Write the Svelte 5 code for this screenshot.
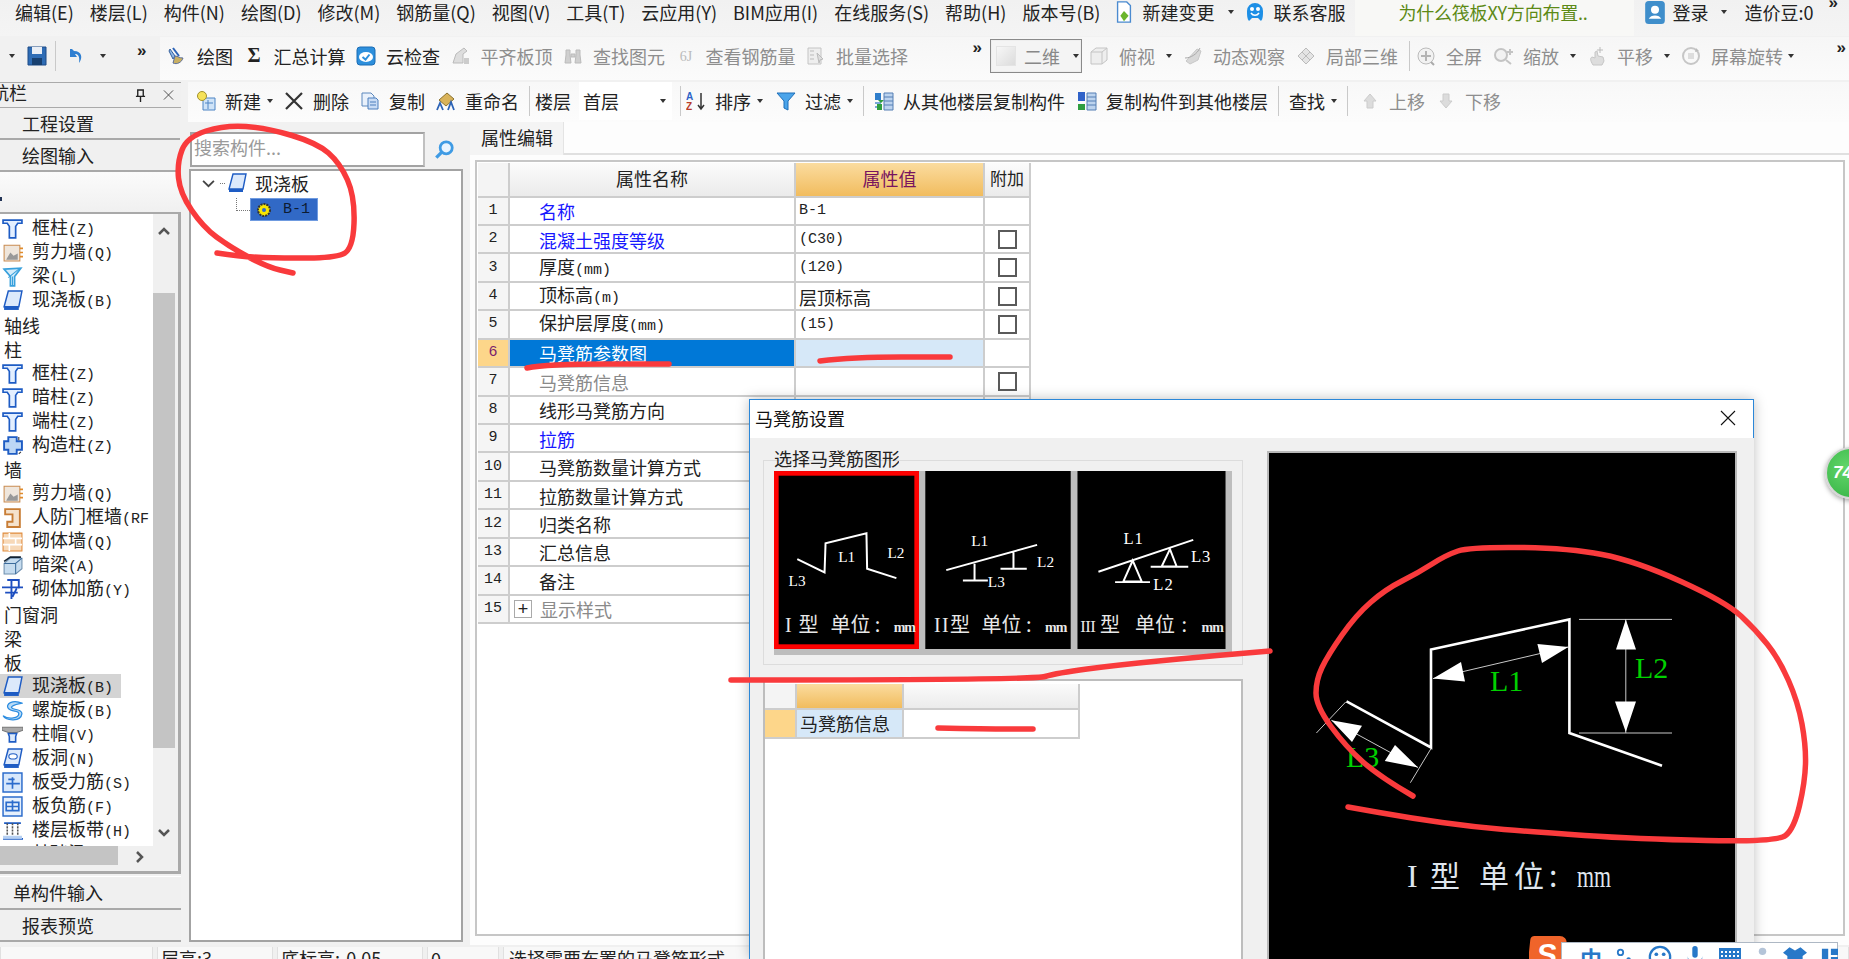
<script>
  const menu = ['编辑(E)','楼层(L)','构件(N)','绘图(D)','修改(M)','钢筋量(Q)','视图(V)','工具(T)','云应用(Y)','BIM应用(I)','在线服务(S)','帮助(H)','版本号(B)'];
  const tb2a = [['brush','绘图'],['sigma','汇总计算'],['cloud','云检查'],['align','平齐板顶',1],['binoc','查找图元',1],['six','查看钢筋量',1],['batch','批量选择',1]];
  const list = [
    ['col','框柱','(Z)'],['wall','剪力墙','(Q)'],['beam','梁','(L)'],['slab','现浇板','(B)'],[0,'轴线'],[0,'柱'],
    ['col','框柱','(Z)'],['col','暗柱','(Z)'],['col','端柱','(Z)'],['gz','构造柱','(Z)'],[0,'墙'],
    ['wall','剪力墙','(Q)'],['door','人防门框墙','(RF'],['brick','砌体墙','(Q)'],['dark','暗梁','(A)'],['mj','砌体加筋','(Y)'],
    [0,'门窗洞'],[0,'梁'],[0,'板'],['slab','现浇板','(B)',1],['spiral','螺旋板','(B)'],['cap','柱帽','(V)'],
    ['hole','板洞','(N)'],['sf','板受力筋','(S)'],['nf','板负筋','(F)'],['band','楼层板带','(H)'],['band','基础梁','(F)']
  ];
  const rows = [
    {n:'名称',c:'blue',v:'B-1',m:1},
    {n:'混凝土强度等级',c:'blue',v:'(C30)',m:1,b:1},
    {n:'厚度',u:'(mm)',v:'(120)',m:1,b:1},
    {n:'顶标高',u:'(m)',v:'层顶标高',b:1},
    {n:'保护层厚度',u:'(mm)',v:'(15)',m:1,b:1},
    {n:'马凳筋参数图',s:1},
    {n:'马凳筋信息',c:'grey',b:1},
    {n:'线形马凳筋方向'},
    {n:'拉筋',c:'blue'},
    {n:'马凳筋数量计算方式'},
    {n:'拉筋数量计算方式'},
    {n:'归类名称'},
    {n:'汇总信息'},
    {n:'备注'},
    {n:'显示样式',c:'grey',plus:1}
  ];
  function smooth(p){
    let d = `M${p[0][0]} ${p[0][1]}`;
    for(let i=1;i<p.length-1;i++){
      const mx=(p[i][0]+p[i+1][0])/2, my=(p[i][1]+p[i+1][1])/2;
      d += ` Q${p[i][0]} ${p[i][1]} ${mx} ${my}`;
    }
    const l=p[p.length-1];
    return d+` L${l[0]} ${l[1]}`;
  }
  const strokes = [
    [[217,253],[243,257],[283,258],[333,258],[353,250],[355,197],[340,163],[317,143],[267,128],[225,125],[187,137],[177,163],[180,193],[203,227],[230,247],[267,267],[293,273]],
    [[527,368],[546,364],[669,364]],
    [[820,361],[853,357],[950,357]],
    [[731,680],[1033,680],[1057,673],[1117,665],[1200,657],[1270,651]],
    [[938,728],[985,729],[1033,729]],
    [[1413,796],[1380,777],[1346,747],[1316,706],[1316,680],[1328,655],[1356,615],[1386,589],[1418,573],[1446,555],[1470,547],[1568,548],[1636,561],[1726,602],[1756,630],[1779,659],[1798,702],[1806,746],[1805,782],[1794,829],[1777,842],[1636,839],[1534,832],[1474,827],[1410,818],[1348,807]]
  ];
</script>

{#snippet icon(k)}
  <svg class="ic" viewBox="0 0 20 20">
    {#if k==='brush'}
      <path d="M3 3l5 7-2 3-4-8z" fill="#8fb8e8" stroke="#35609c"/><path d="M8 10c3 0 4 2 8 2-1 4-6 7-10 5z" fill="#c9b063" stroke="#5c6f9a"/><path d="M6 2l6 8" stroke="#2c63b6" stroke-width="2"/>
    {:else if k==='sigma'}
      <text x="10" y="16" text-anchor="middle" class="sig">Σ</text>
    {:else if k==='cloud'}
      <rect x="1" y="1" width="18" height="18" rx="3" fill="#2d8fdc" stroke="#1a6cb5"/><ellipse cx="10" cy="11" rx="7" ry="5" fill="#fff"/><path d="M6.500 11l3 2.500 4-5" fill="none" stroke="#2d8fdc" stroke-width="2"/>
    {:else if k==='align'}
      <path d="M2 17l3-9 8-6 3 3-4 3v9z" fill="#ddd" stroke="#bbb"/><path d="M13 12h5v6h-5z" fill="#ccc"/>
    {:else if k==='binoc'}
      <path d="M3 4h4v5l1 8H2l1-8zM13 4h4v5l1 8h-6l1-8zM8 8h4v3H8z" fill="#cfcfcf" stroke="#bbb"/>
    {:else if k==='six'}
      <text x="10" y="15" text-anchor="middle" class="six">6J</text>
    {:else if k==='batch'}
      <path d="M2 2h13v16H2z" fill="#eee" stroke="#c4c4c4"/><path d="M4 5h4M4 9h4M4 13h4M11 7l6 6-3 1-1 3z" stroke="#bbb" fill="#ddd"/>
    {:else if k==='cube'}
      <path d="M2 6l5-4h11v12l-5 4H2zM2 6h11v12M13 6l5-4" fill="#eee" stroke="#c4c4c4"/>
    {:else if k==='orbit'}
      <path d="M3 15L14 3l4 2-3 9-8 4z" fill="#d8d8d8" stroke="#c8c8c8"/><path d="M2 12c6 0 12-4 15-10" fill="none" stroke="#aaa"/>
    {:else if k==='part'}
      <path d="M10 2l8 8-8 8-8-8z" fill="#e4e4e4" stroke="#bbb"/><path d="M6 6l8 8M14 6l-8 8" stroke="#bbb"/>
    {:else if k==='full'}
      <circle cx="10" cy="10" r="8" fill="#f2f2f2" stroke="#bbb"/><path d="M10 5v10M5 10h10" stroke="#b4b4b4" stroke-width="2"/><path d="M15 16l3 3" stroke="#aaa" stroke-width="2"/>
    {:else if k==='zoom'}
      <circle cx="8" cy="9" r="6" fill="#f2f2f2" stroke="#c4c4c4" stroke-width="2"/><path d="M13 14l5 4M17 3v6M14 6h6" stroke="#c4c4c4" stroke-width="2"/>
    {:else if k==='pan'}
      <path d="M6 19c-3-5-3-7-1-8l3 1V6l2-1 1 5 5 1 1 4-2 4z" fill="#ddd" stroke="#c6c6c6"/><path d="M13 1v6M10 4h6" stroke="#bbb"/>
    {:else if k==='rotate'}
      <circle cx="10" cy="10" r="8" fill="none" stroke="#c6c6c6" stroke-width="2"/><path d="M7 7h6v6H7z" fill="#ddd"/><path d="M15 2l3 3-4 1z" fill="#bbb"/>
    {:else if k==='new'}
      <path d="M7 7h12v12H7z" fill="#cfe3f7" stroke="#4d84c4"/><path d="M9 12h8M12 9v9" stroke="#4d84c4"/><circle cx="6" cy="5" r="4.500" fill="#f6e25a" stroke="#a2912c"/>
    {:else if k==='x'}
      <path d="M2 2l16 16M18 2L2 18" stroke="#333" stroke-width="2.200"/>
    {:else if k==='copy'}
      <path d="M2 2h9l3 3v10H2z" fill="#e9f1fb" stroke="#5d88bd"/><path d="M8 7h8l2 2v9H8z" fill="#c9dcf5" stroke="#4d7fbd"/><path d="M10 11h6M10 14h6" stroke="#4d7fbd"/>
    {:else if k==='rename'}
      <path d="M3 9l8-7 7 6-8 7z" fill="#d9b35a" stroke="#8a7230"/><path d="M1 19l3-7 3 7M12 19l3-8 3 8" fill="none" stroke="#2c63b6" stroke-width="1.800"/>
    {:else if k==='sort'}
      <text x="0" y="9" class="az a">A</text><text x="0" y="19" class="az z">Z</text><path d="M15 2v15M12 14l3 4 3-4" fill="none" stroke="#333" stroke-width="1.500"/>
    {:else if k==='funnel'}
      <path d="M1 2h18l-7 8v9l-4-2v-7z" fill="#4aa4ea" stroke="#1f6fb8"/>
    {:else if k==='from'}
      <path d="M1 2h6v7H1z" fill="#2f7ecb"/><path d="M1 11h6v2H1zM1 15h6v2H1z" fill="#79a8d8"/><path d="M4 9l3 3 3-3zM3 13h5v6H3z" fill="#2f9e3f"/><path d="M10 2h9v17h-9z" fill="#bcd3ee" stroke="#557fb4"/><path d="M10 6h9M10 10h9M10 14h9" stroke="#557fb4"/>
    {:else if k==='to'}
      <path d="M10 2h9v17h-9z" fill="#bcd3ee" stroke="#557fb4"/><path d="M10 6h9M10 10h9M10 14h9" stroke="#557fb4"/><path d="M1 1h7v9H1z" fill="#2f62c9"/><path d="M1 13h7v6H1z" fill="#2f9e3f"/>
    {:else if k==='up'}
      <path d="M10 3l6 7h-3v7H7v-7H4z" fill="#dcdcdc" stroke="#ccc"/>
    {:else if k==='down'}
      <path d="M10 17l6-7h-3V3H7v7H4z" fill="#dcdcdc" stroke="#ccc"/>
    {:else if k==='col'}
      <path d="M1 2h18v3h-4l-2 3v11H7V8L5 5H1z" fill="#e3efff" stroke="#1e5cc4" stroke-width="1.600"/>
    {:else if k==='wall'}
      <path d="M2 3h15v15H2z" fill="#efe6dc" stroke="#c98c52"/><path d="M5 15l3-5 3 3 4-2v6H4z" fill="#999"/><path d="M17 6h3M17 10h3M17 14h3" stroke="#e08b2c" stroke-width="1.600"/>
    {:else if k==='beam'}
      <path d="M2 3l16-1-6 8v9H8v-9z" fill="#d4ecfa" stroke="#38a0dc" stroke-width="1.600"/><path d="M6 11l10-8M10 10v9" stroke="#38a0dc"/>
    {:else if k==='slab'}
      <path d="M6 1h13l-3 15H2z" fill="#dce9fb" stroke="#1e5cc4" stroke-width="1.400"/><path d="M2 16h14v3H2z" fill="#1e5cc4"/>
    {:else if k==='gz'}
      <path d="M6 2h8v4h5v8h-5v4H6v-4H2V6h4z" fill="#bcd6f5" stroke="#1e5cc4" stroke-width="1.800"/><path d="M16 2v3M18 16l-2 2" stroke="#333"/>
    {:else if k==='door'}
      <path d="M3 2h14v17H5v-5h5V7H3z" fill="#f5e2cc" stroke="#c87d35" stroke-width="1.800"/>
    {:else if k==='brick'}
      <path d="M1 2h18v17H1z" fill="#f7d9b8" stroke="#e08b3c"/><path d="M1 7h18M1 13h18M7 2v5M13 7v6M7 13v6" stroke="#fff" stroke-width="1.500"/>
    {:else if k==='dark'}
      <path d="M2 8l6-5h11v10l-6 5H2z" fill="#c6dcef" stroke="#6f8fae"/><path d="M2 8h11v10M13 8l6-5" fill="none" stroke="#3c6c9c"/><path d="M2 6l6-4h10" fill="none" stroke="#123" stroke-width="1.500"/>
    {:else if k==='mj'}
      <path d="M0 8h20M5 1h11v8M9 1v18M14 9l-4 8M3 13h12" fill="none" stroke="#1e4fc0" stroke-width="1.800"/>
    {:else if k==='spiral'}
      <path d="M19 3C10-1 3 4 6 8s10 1 10 5-9 6-15 2c3 5 17 6 18-2 0-5-9-3-10-6 0-2 6-3 10-4z" fill="#b9dbf6" stroke="#2c8ce0" stroke-width="1.200"/>
    {:else if k==='cap'}
      <path d="M0 3h20v3l-6 2H6L0 6z" fill="#aaa" stroke="#777"/><path d="M6 9h8l-1 3v5H7v-5z" fill="#dbe9fb" stroke="#1e5cc4" stroke-width="1.500"/>
    {:else if k==='hole'}
      <path d="M6 1h13l-3 15H2z" fill="#dce9fb" stroke="#1e5cc4" stroke-width="1.400"/><path d="M2 16h14v3H2z" fill="#1e5cc4"/><ellipse cx="10.500" cy="8" rx="4" ry="2.500" fill="#fff" stroke="#1e5cc4"/>
    {:else if k==='sf'}
      <path d="M1 1h18v18H1z" fill="#d7e7fb" stroke="#2c6ccc" stroke-width="1.400"/><path d="M4 11h13M10 5v11M6 7h6" fill="none" stroke="#2c6ccc" stroke-width="1.600"/>
    {:else if k==='nf'}
      <path d="M1 1h18v18H1z" fill="#e6f0fc" stroke="#2c6ccc" stroke-width="1.400"/><path d="M4 6h12v8H4zM4 10h12M10 4v10" fill="none" stroke="#2c6ccc" stroke-width="1.600"/>
    {:else if k==='band'}
      <path d="M2 3h16M1 18h19" stroke="#1e5cc4" stroke-width="1.800"/><path d="M5 3v12M10 3v12M15 3v12" stroke="#555" stroke-width="1.500" stroke-dasharray="2 1"/><path d="M1 15h18v3H1z" fill="#b6d0f2"/>
    {/if}
  </svg>
{/snippet}

<div class="app">
  <header class="menubar">
    {#each menu as m}<span class="m">{m}</span>{/each}
    <span class="mi change">
      <svg class="ic" viewBox="0 0 20 24"><path d="M3 1h10l4 4v18H3z" fill="#fff" stroke="#4a8ad0" stroke-width="1.500"/><path d="M10 11l5 5-5 6-4-6z" fill="#6ab52c"/></svg>
      <span>新建变更</span><i class="caret"></i>
    </span>
    <span class="mi service">
      <svg class="ic" viewBox="0 0 20 22"><path d="M2 10a8 8 0 0116 0c0 4 0 8-2 10l-3-3H7l-3 3c-2-2-2-6-2-10z" fill="#1d8fe6"/><circle cx="7" cy="8" r="2" fill="#fff"/><circle cx="13" cy="8" r="2" fill="#fff"/><path d="M6 12c2 3 6 3 8 0" fill="none" stroke="#fff" stroke-width="1.500"/></svg>
      <span>联系客服</span>
    </span>
    <span class="promo">为什么筏板XY方向布置..</span>
    <span class="mi login">
      <svg class="uicon" viewBox="0 0 24 28"><rect x="1" y="1" width="22" height="26" rx="4" fill="#3f8ecb"/><circle cx="12" cy="11" r="4.500" fill="#fff"/><path d="M5 21c2-5 12-5 14 0z" fill="#fff"/></svg>
      <span>登录</span><i class="caret"></i>
    </span>
    <span class="m bean">造价豆:0</span>
    <span class="more top">»</span>
  </header>

  <div class="tb2">
    <div class="seg s1">
      <i class="caret"></i>
      <svg class="ic save" viewBox="0 0 20 20"><path d="M1 1h18v18H1z" fill="#2e6cb5" stroke="#1d4a87"/><path d="M5 1h10v7H5z" fill="#e9eef5"/><path d="M5 12h10v7H5z" fill="#174070"/></svg>
      <span class="vsep"></span>
      <svg class="ic undo" viewBox="0 0 20 20"><path d="M4 3v8h7l-2-3c3 0 5 2 4 9 4-5 3-12-5-12L6 3z" fill="#2f7fd1"/></svg>
      <i class="caret c2"></i>
      <span class="more">»</span>
    </div>
    <div class="seg s2">
      {#each tb2a as [k,t,d]}
        <span class="it" class:dis={d}>{@render icon(k)}<span>{t}</span></span>
      {/each}
      <span class="more end">»</span>
    </div>
    <div class="seg s3">
      <span class="combo2"><span class="sq"></span><span>二维</span><i class="caret"></i></span>
      <span class="it dis">{@render icon('cube')}<span>俯视</span><i class="caret"></i></span>
      <span class="it dis">{@render icon('orbit')}<span>动态观察</span></span>
      <span class="it dis">{@render icon('part')}<span>局部三维</span></span>
      <span class="vsep"></span>
      <span class="it dis">{@render icon('full')}<span>全屏</span></span>
      <span class="it dis">{@render icon('zoom')}<span>缩放</span><i class="caret"></i></span>
      <span class="it dis">{@render icon('pan')}<span>平移</span><i class="caret"></i></span>
      <span class="it dis">{@render icon('rotate')}<span>屏幕旋转</span><i class="caret tight"></i></span>
      <span class="more end">»</span>
    </div>
  </div>

  <div class="body">
    <aside class="left">
      <div class="lhead">
        <span class="lt">航栏</span>
        <svg class="pin" viewBox="0 0 12 14"><path d="M3 1h6v7H3zM1 8h10M6 8v6" fill="none" stroke="#222" stroke-width="1.500"/></svg>
        <svg class="cl" viewBox="0 0 12 12"><path d="M1 1l10 10M11 1L1 11" stroke="#444"/></svg>
      </div>
      <div class="ltab t1">工程设置</div>
      <div class="ltab t2">绘图输入</div>
      <div class="lsec"><i class="dot"></i></div>
      <div class="lbox">
        <div class="lmain">
          <div class="llist">
            {#each list as [k,n,c,sel]}
              <div class="lr" class:sel class:sect={!k}>
                {#if k}{@render icon(k)}{/if}<span class="tx">{n}{#if c}<span class="mono">{c}</span>{/if}</span>
              </div>
            {/each}
          </div>
          <div class="vbar">
            <svg class="ar" viewBox="0 0 14 10"><path d="M2 8l5-5 5 5" fill="none" stroke="#555" stroke-width="2.500"/></svg>
            <div class="vthumb"></div>
            <svg class="ar" viewBox="0 0 14 10"><path d="M2 2l5 5 5-5" fill="none" stroke="#555" stroke-width="2.500"/></svg>
          </div>
        </div>
        <div class="hbar">
          <div class="hthumb"></div>
          <svg class="har" viewBox="0 0 10 14"><path d="M2 2l5 5-5 5" fill="none" stroke="#555" stroke-width="2.500"/></svg>
        </div>
      </div>
      <div class="ltab t3">单构件输入</div>
      <div class="ltab t4">报表预览</div>
    </aside>

    <div class="rightcol">
      <div class="tb3">
        <span class="it">{@render icon('new')}<span>新建</span><i class="caret"></i></span>
        <span class="it">{@render icon('x')}<span>删除</span></span>
        <span class="it">{@render icon('copy')}<span>复制</span></span>
        <span class="it">{@render icon('rename')}<span>重命名</span></span>
        <span class="vsep"></span>
        <span class="floor">楼层</span>
        <span class="fcombo"><span>首层</span><i class="caret"></i></span>
        <span class="vsep"></span>
        <span class="it">{@render icon('sort')}<span>排序</span><i class="caret"></i></span>
        <span class="it filter">{@render icon('funnel')}<span>过滤</span><i class="caret"></i></span>
        <span class="vsep"></span>
        <span class="it from">{@render icon('from')}<span>从其他楼层复制构件</span></span>
        <span class="it to">{@render icon('to')}<span>复制构件到其他楼层</span></span>
        <span class="vsep"></span>
        <span class="it find">查找<i class="caret"></i></span>
        <span class="vsep"></span>
        <span class="it dis upi">{@render icon('up')}<span>上移</span></span>
        <span class="it dis">{@render icon('down')}<span>下移</span></span>
      </div>

      <div class="panes">
        <section class="mid">
          <div class="searchrow">
            <div class="search">搜索构件...</div>
            <svg class="sicon" viewBox="0 0 20 20"><circle cx="12" cy="8" r="5.500" fill="#eaf5ff" stroke="#3f9be4" stroke-width="2.500"/><path d="M8 12l-5 5" stroke="#3f9be4" stroke-width="3"/></svg>
          </div>
          <div class="tree">
            <div class="tnode">
              <svg class="chev" viewBox="0 0 14 10"><path d="M1 2l6 6 6-6" fill="none" stroke="#444" stroke-width="2"/></svg>
              <span class="dots"></span>
              {@render icon('slab')}
              <span class="cn">现浇板</span>
            </div>
            <div class="tleaf">
              <span class="elbow"></span>
              <span class="leafsel">
                <svg class="gear" viewBox="0 0 16 16"><circle cx="8" cy="8" r="6" fill="#f7e600" stroke="#333" stroke-dasharray="2 1" stroke-width="2"/><circle cx="8" cy="8" r="2" fill="#3169c6"/></svg>
                <span class="mono">B-1</span>
              </span>
            </div>
          </div>
        </section>

        <section class="props">
          <div class="tabs"><div class="tab">属性编辑</div></div>
          <div class="gridbox">
            <div class="grow head">
              <div class="c num"></div>
              <div class="c name ctr">属性名称</div>
              <div class="c val gold">属性值</div>
              <div class="c ext">附加</div>
            </div>
            {#each rows as r,i}
              <div class="grow" class:on={r.s}>
                <div class="c num">{i+1}</div>
                <div class="c name" class:blue={r.c==='blue'} class:grey={r.c==='grey'}>
                  {#if r.plus}<span class="plus">+</span>{/if}
                  <span class="tx">{r.n}{#if r.u}<span class="mono">{r.u}</span>{/if}</span>
                </div>
                <div class="c val">{#if r.v}<span class:mono={r.m}>{r.v}</span>{/if}</div>
                <div class="c ext">{#if r.b}<span class="check"></span>{/if}</div>
              </div>
            {/each}
          </div>
        </section>
      </div>
    </div>
  </div>

  <footer class="status">
    <span class="sc a"></span>
    <span class="sc b">层高:3</span>
    <span class="sc d">底标高:-0.05</span>
    <span class="sc e">0</span>
    <span class="sc f">选择需要布置的马凳筋形式</span>
  </footer>

  <div class="dialog">
    <div class="dtitle">
      <span>马凳筋设置</span>
      <svg class="dclose" viewBox="0 0 16 16"><path d="M1 1l14 14M15 1L1 15" stroke="#111" stroke-width="1.100"/></svg>
    </div>
    <div class="dbody">
      <div class="dleft">
        <div class="group">
          <span class="glabel">选择马凳筋图形</span>
          <div class="strip">
            <svg class="thumb t-a" viewBox="102 243 436 535">
              <rect x="102" y="243" width="436" height="535" fill="#000"/>
              <rect x="109" y="250" width="422" height="521" fill="none" stroke="#f00" stroke-width="14"/>
              <path d="M172 508l82 40 3-88 123-30 2 107 88 28" fill="none" stroke="#fff" stroke-width="6"/>
              <text x="295" y="517" class="lb">L1</text><text x="443" y="503" class="lb">L2</text><text x="146" y="588" class="lb">L3</text>
              <text x="135" y="726" class="cap">I</text><text x="176" y="726" class="capc">型</text><text x="272" y="726" class="capc">单位</text><text x="405" y="726" class="capc">:</text><text x="462" y="726" class="mm">mm</text>
            </svg>
            <svg class="thumb t-b" viewBox="557 243 437 535">
              <rect x="557" y="243" width="437" height="535" fill="#000"/>
              <path d="M620 541l273-76M705 522v50M670 572h75M822 488v49M783 537h79" fill="none" stroke="#fff" stroke-width="6"/>
              <text x="695" y="468" class="lb">L1</text><text x="893" y="533" class="lb">L2</text><text x="745" y="593" class="lb">L3</text>
              <text x="583" y="726" class="cap">II</text><text x="631" y="726" class="capc">型</text><text x="726" y="726" class="capc">单位</text><text x="860" y="726" class="capc">:</text><text x="917" y="726" class="mm">mm</text>
            </svg>
            <svg class="thumb t-c" viewBox="1012 243 445 535">
              <rect x="1012" y="243" width="445" height="535" fill="#000"/>
              <path d="M1075 546l285-96M1178 512l-28 63h55zM1125 577h105M1290 478l-25 52h45zM1232 531h113" fill="none" stroke="#fff" stroke-width="6"/>
              <text x="1150" y="463" class="lb w">L1</text><text x="1353" y="516" class="lb w">L3</text><text x="1240" y="600" class="lb w">L2</text>
              <text x="1020" y="726" class="cap c3">III</text><text x="1080" y="726" class="capc">型</text><text x="1185" y="726" class="capc">单位</text><text x="1325" y="726" class="capc">:</text><text x="1385" y="726" class="mm">mm</text>
            </svg>
          </div>
        </div>
        <div class="lower">
          <div class="lrow lh"><span class="l1"></span><span class="l2 gold"></span><span class="l3 hd"></span></div>
          <div class="lrow"><span class="l1 org"></span><span class="l2 cur">马凳筋信息</span><span class="l3"></span></div>
        </div>
      </div>
      <div class="preview">
        <svg class="pv" viewBox="1269 453 466 506">
          <rect x="1269" y="453" width="466" height="506" fill="#000"/>
          <path d="M1346.500 701.400L1431 747.500V649.500L1569.400 619.400V733L1662 765.700" fill="none" stroke="#fff" stroke-width="2.600"/>
          <path d="M1579 619.400h93M1579 733h93M1625.800 619v114M1433 678.600L1568 647M1331.400 720.300L1418 767.500M1345.700 702L1316.400 733M1431 748.600L1410.400 782.700" fill="none" stroke="#c8c8c8" stroke-width="1"/>
          <path d="M1625.800 619.400L1616 649.500h20zM1625.800 732L1615 701.400h21zM1433 678.600L1461 662l4 19.500zM1568.300 647L1537.400 644l4.600 19zM1331.400 720.300L1362 725.800l-10 16.200zM1418 767.500L1395 745l-10.200 16z" fill="#fff"/>
          <text x="1635" y="678" class="gr">L2</text><text x="1490" y="691" class="gr">L1</text><text x="1346" y="767" class="gr">L3</text>
          <text x="1407" y="887" class="big">I</text><text x="1430" y="887" class="bigc">型</text><text x="1479" y="887" class="bigc">单位:</text><text x="1577" y="887" class="big" textLength="34" lengthAdjust="spacingAndGlyphs">mm</text>
        </svg>
      </div>
    </div>
  </div>

  <div class="ball"><span>74</span></div>

  <div class="ime">
    <div class="ilogo"><span>S</span></div>
    <div class="ibar">
      <span class="zh">中</span>
      <svg viewBox="0 0 20 20" class="ii"><circle cx="5" cy="6" r="3" fill="none" stroke="#2878c8" stroke-width="2"/><circle cx="14" cy="14" r="2.500" fill="#2878c8"/></svg>
      <svg viewBox="0 0 26 26" class="ii w"><circle cx="13" cy="13" r="11" fill="none" stroke="#2878c8" stroke-width="2.500"/><circle cx="9" cy="10" r="2" fill="#2878c8"/><circle cx="17" cy="10" r="2" fill="#2878c8"/></svg>
      <svg viewBox="0 0 20 24" class="ii"><rect x="7" y="1" width="6" height="13" rx="3" fill="#2878c8"/><path d="M2 12c0 9 16 9 16 0v8H2z" fill="#2878c8"/></svg>
      <svg viewBox="0 0 24 20" class="ii w"><rect x="1" y="1" width="22" height="18" fill="#2878c8"/><path d="M3 5h18M3 9h18" stroke="#fff" stroke-dasharray="2 2" stroke-width="2"/></svg>
      <svg viewBox="0 0 14 20" class="ii n"><circle cx="7" cy="5" r="4" fill="#b4c4d8"/><path d="M1 20c0-9 12-9 12 0z" fill="#b4c4d8"/></svg>
      <svg viewBox="0 0 22 20" class="ii w"><path d="M6 1l5 3 5-3 6 5-4 3v11H4V9L0 6z" fill="#2878c8"/></svg>
      <svg viewBox="0 0 20 20" class="ii"><path d="M1 2h7v16H1zM11 2h8v7h-8zM11 11h8v7h-8z" fill="#2878c8"/></svg>
    </div>
  </div>

  <svg class="ink" viewBox="0 0 1849 959">
    {#each strokes as s}<path d={smooth(s)}/>{/each}
  </svg>
</div>

<style>
  :global(body){margin:0;background:#f0f0f0}
  .app{position:relative;width:1849px;height:959px;overflow:hidden;display:flex;flex-direction:column;background:#f1f1f1;color:#222;font:18px/24px "Noto Sans CJK SC","Noto Sans",sans-serif;white-space:nowrap}
  .ic{width:20px;height:20px;flex:none;display:block}
  .mono{font:15px/24px "Liberation Mono",monospace}
  .caret{display:inline-block;width:0;height:0;border:3.500px solid transparent;border-top:4.500px solid #333;border-bottom:0;flex:none}

  .menubar{height:36px;box-sizing:border-box;flex:none;display:flex;align-items:center;gap:16px;padding:0 0 12px 15px;background:linear-gradient(#f1f1f1,#f4f4f4);position:relative}
  .mi{display:flex;align-items:center;gap:8px}
  .mi.change{margin-left:-2px}
  .mi.change .ic,.mi.service .ic{height:22px}
  .mi.change .caret{margin-left:6px}
  .mi.service{margin-left:-5px}
  .promo{width:279px;box-sizing:border-box;padding-left:43px;margin:0 0 -12px -6px;color:#5d8a16;background:#f8f8f6;line-height:24px;letter-spacing:-.2px;height:36px}
  .mi.login{margin-left:-6px;gap:6px}
  .uicon{width:22px;height:25px}
  .mi.login .caret{margin-left:7px}
  .bean{margin-left:1px}
  .more{font:700 17px/14px "Liberation Sans",sans-serif;color:#222}
  .more.top{position:absolute;right:11px;top:-4px}

  .tb2{height:46px;flex:none;display:flex;background:#f1f1f1}
  .seg{display:flex;align-items:center;position:relative;margin:1px 0 2px;padding-bottom:5px;box-sizing:border-box;background:linear-gradient(#f6f6f6,#fbfbfb)}
  .s1{width:160px;background:none;padding-left:9px}
  .s1 .save{margin-left:12px}
  .s1 .vsep{margin:0 10px 0 8px}
  .s1 .c2{margin-left:14px}
  .s1 .more{margin-left:31px;margin-top:-10px}
  .s2{width:825px;padding-left:7px;gap:10.500px}
  .s3{flex:1;padding-left:5px;gap:11px}
  .it{display:flex;align-items:center;gap:10px;flex:none}
  .tb2 .it .caret{margin-left:1px}
  .tb2 .it .caret.tight{margin-left:-5px}
  .s3 .vsep{margin-right:-5px}
  .it.dis{color:#8e8e8e}
  .more.end{position:absolute;right:3px;top:4px}
  .vsep{width:1px;height:30px;background:#c9c9c9;flex:none}
  .combo2{width:92px;height:34px;box-sizing:border-box;border:1px solid #8a8a8a;box-shadow:inset 0 0 0 1px #eee;display:flex;align-items:center;gap:8px;padding-left:5px;color:#888;flex:none;background:#f4f4f4;margin-right:-4px}
  .combo2 .sq{width:20px;height:20px;background:linear-gradient(135deg,#f7f7f7,#dcdcdc);border:1px solid #e4e4e4;box-sizing:border-box}
  .combo2 .caret{margin-left:5px}

  .body{flex:1;display:flex;min-height:0}
  .left{width:181px;flex:none;display:flex;flex-direction:column}
  .lhead{flex:none;position:relative;overflow:hidden;border-top:1px solid #aaa;border-bottom:1px solid #aaa;background:#f0f0f0;box-sizing:border-box;height:26px}
  .lt{position:absolute;left:-9px;top:-3px}
  .pin{position:absolute;left:135px;top:6px;width:11px;height:13px}
  .cl{position:absolute;left:163px;top:6px;width:11px;height:12px}
  .ltab{height:32px;flex:none;box-sizing:border-box;border-bottom:2px solid #a9a9a9;background:#f0f0f0;line-height:31px;padding-left:22px;margin-right:1px}
  .t3,.t4{margin-right:0}
  .t3{padding-left:13px;height:34px;border-top:1px solid #fff}
  .lsec{height:42px;flex:none;background:linear-gradient(#fbfbfb,#f0f0f0);border-bottom:2px solid #a9a9a9;box-sizing:border-box;position:relative}
  .dot{position:absolute;left:0;top:25px;width:2px;height:4px;background:#235}
  .lbox{height:660px;flex:none;box-sizing:border-box;border-right:3px solid #a9a9a9;border-bottom:3px solid #a9a9a9;display:flex;flex-direction:column;background:#f0f0f0;margin-bottom:2px}
  .lmain{height:632px;display:flex;overflow:hidden}
  .llist{width:153px;flex:none;overflow:hidden;background:#fff;padding-top:2.500px;box-sizing:border-box}
  .lr{height:24.100px;display:flex;align-items:center;padding-left:2px;overflow:hidden}
  .lr .ic{margin-right:9px;width:21px;height:21px}
  .lr.sect{padding-left:4px}
  .lr.sel{background:#d4d4d4;width:119px}
  .vbar{width:22px;flex:none;background:#f0f0f0;display:flex;flex-direction:column;align-items:center;justify-content:space-between;position:relative;padding:12px 0 8px;box-sizing:border-box}
  .ar{width:14px;height:10px}
  .vthumb{position:absolute;left:0;top:79px;width:22px;height:455px;background:#c4c4c4}
  .hbar{flex:1;display:flex;align-items:center;position:relative;background:#f0f0f0}
  .hthumb{position:absolute;left:0;top:0;bottom:6px;width:118px;background:#c4c4c4}
  .har{position:absolute;left:135px;top:4px;width:10px;height:14px}

  .rightcol{flex:1;display:flex;flex-direction:column;min-width:0}
  .tb3{height:40px;box-sizing:border-box;flex:none;margin-left:7px;padding:0 0 2px 8px;display:flex;align-items:center;gap:11px;background:linear-gradient(#f8f8f8,#fcfcfc)}
  .tb3 .it{gap:9px}
  .tb3 .caret{margin-left:-3px}
  .tb3 .vsep{margin:0 -6px 0 -1px}
  .tb3 .filter{margin-left:2px}
  .tb3 .from{margin-left:5px}
  .tb3 .to{margin-left:1px}
  .tb3 .find{margin-left:5px}
  .tb3 .upi{margin-left:7px}
  .fcombo{width:93px;height:38px;display:flex;align-items:center;justify-content:space-between;background:#fff;padding:0 6px 0 4px;box-sizing:border-box;margin-left:-3px;margin-right:-2px}
  .fcombo .caret{margin:0}
  .panes{flex:1;display:flex;min-height:0}

  .mid{width:284px;flex:none;margin-left:5px;display:flex;flex-direction:column;padding-top:10px;box-sizing:border-box}
  .searchrow{display:flex;align-items:center;height:35px;margin-left:4px;flex:none}
  .search{width:235px;height:35px;box-sizing:border-box;border:2px solid #a3a3a3;border-right-color:#c0c0c0;background:#fff;color:#9a9a9a;line-height:26px;padding-left:2px}
  .sicon{width:22px;height:22px;margin-left:8px}
  .tree{width:274px;height:773px;margin:2px 0 0 3px;box-sizing:border-box;border:2px solid #a3a3a3;background:#fff;flex:none}
  .tnode{display:flex;align-items:center;height:24px;padding-left:11px}
  .chev{width:13px;height:9px}
  .dots{width:5px;margin:0 2px 0 5px;border-top:1px dotted #777}
  .tnode .cn{margin-left:8px}
  .tleaf{display:flex;height:23px;margin-top:3px;padding-left:45px}
  .elbow{width:13px;height:12px;border-left:1px dotted #777;border-bottom:1px dotted #777;flex:none}
  .leafsel{width:68px;height:23px;background:#3169c6;display:flex;align-items:center;box-shadow:0 0 0 1px #6f9be0 inset;color:#0d1c33;padding-left:6px;box-sizing:border-box;gap:11px}
  .gear{width:16px;height:16px}

  .props{flex:1;display:flex;flex-direction:column;min-width:0;background:#fdfdfd;padding-bottom:9px}
  .tabs{height:31px;flex:none;border-bottom:2px solid #e0e0e0;box-sizing:content-box}
  .tab{width:94px;height:33px;box-sizing:border-box;background:#f4f4f4;padding-left:11px;line-height:30px;border-right:1px solid #e4e4e4}
  .gridbox{flex:1;margin:5px 4px 0 5px;border:2px solid #c6c6c6;padding:1px 0 0 1px;background:#fff;overflow:hidden;display:flex;flex-direction:column}
  .grow{display:flex;height:28.450px;flex:none;width:554px}
  .grow.head{height:34.500px}
  .c{box-sizing:border-box;border-right:2px solid #cdcdcd;border-bottom:2px solid #cdcdcd;display:flex;align-items:center;overflow:hidden}
  .num{width:32px;justify-content:center;background:#f5f5f5;font:15px/24px "Liberation Mono",monospace;color:#222}
  .name{width:286px;padding:1px 0 0 29px;background:#fff}
  .val{width:189px;padding:1px 0 0 3px;background:#fff}
  .ext{width:46px;justify-content:center;background:#fff}
  .head .c{background:linear-gradient(#fbfbfb,#ebebeb);justify-content:center;padding:0 0 2px}
  .head .num{background:#f4f4f4}
  .head .val.gold,.gold{background:linear-gradient(#fbdc9f,#f1bc5e);color:#78145f}
  .head .ext{font-size:17px}
  .blue{color:#1717ff}
  .grey{color:#8a8a8a}
  .on .num{background:#fdd68a;color:#7a1f6e}
  .on .name{background:#0078d7;color:#fff}
  .on .val{background:#d6e8f8}
  .check{width:19px;height:19px;box-sizing:border-box;border:2px solid #5a5a5a;background:#fff}
  .plus{width:18px;height:18px;border:1px solid #aaa;box-sizing:border-box;color:#222;display:flex;align-items:center;justify-content:center;line-height:14px;margin:0 8px 0 -25px;flex:none;font-family:"Liberation Sans",sans-serif}

  .status{height:14px;flex:none;display:flex;gap:4px;background:#f0f0f0;overflow:hidden;padding-top:2px;box-sizing:border-box}
  .sc{background:#f8f8f8;border-left:1px solid #e0e0e0;border-right:1px solid #e0e0e0;height:24px;padding-left:3px;box-sizing:border-box;flex:none;line-height:22px}
  .sc.a{width:153px}
  .sc.b{width:116px}
  .sc.d{width:146px}
  .sc.e{width:72px}
  .sc.f{flex:1;padding-left:5px}

  .dialog{position:absolute;left:749px;top:399px;width:1005px;height:560px;box-sizing:border-box;display:flex;flex-direction:column;background:#f0f0f0;border-left:1px solid #2b87d8;box-shadow:0 0 12px rgba(0,0,0,.25)}
  .dtitle{height:39px;flex:none;background:#fff;border-top:1px solid #2b87d8;border-right:1px solid #2b87d8;display:flex;align-items:center;justify-content:space-between;padding:0 17px 2px 5px;color:#111;box-sizing:border-box}
  .dclose{width:16px;height:16px}
  .dbody{flex:1;display:flex;min-height:0;padding:13px 17px 0 13px;gap:24px;overflow:hidden}
  .dleft{width:480px;flex:none;padding-top:9px;box-sizing:border-box;display:flex;flex-direction:column;gap:14px}
  .group{height:205px;flex:none;border:1px solid #dcdcdc;box-sizing:border-box;padding:10px 0 0 10px;position:relative}
  .glabel{position:absolute;left:10px;top:-15px;line-height:24px;width:125px;overflow:hidden}
  .strip{display:flex;width:458px;height:184px;gap:6px;background:#bdbdbd}
  .thumb{display:block;height:178px}
  .t-a{width:145px}
  .t-b{width:146px}
  .t-c{width:149px}
  .lb{font:46px "Liberation Serif",serif;fill:#fff}
  .lb.w{letter-spacing:3px;font-size:50px}
  .cap{font:60px "Liberation Serif",serif;fill:#e8e8e8;letter-spacing:4px}
  .cap.c3{font-size:50px;letter-spacing:-1.500px}
  .capc{font:60px "Noto Sans CJK SC",sans-serif;fill:#e8e8e8}
  .mm{font:700 42px "Liberation Serif",serif;fill:#e8e8e8;letter-spacing:-3px}
  .lower{flex:1;background:#fff;border:2px solid #bdbdbd;border-bottom:0;box-sizing:border-box;padding-top:3px}
  .lrow{display:flex;height:29px;width:315px}
  .lrow.lh{height:26px}
  .lrow span{box-sizing:border-box;border-right:2px solid #cdcdcd;border-bottom:2px solid #cdcdcd;display:block;line-height:26px}
  .l1{width:32px}
  .lh .l1{background:#f4f4f4}
  .l2{width:107px}
  .l3{width:176px}
  .hd{background:linear-gradient(#fbfbfb,#ebebeb)}
  .org{background:#fdd68a}
  .cur{background:#d6e8f8;padding-left:3px}
  .preview{width:470px;flex:none;box-sizing:border-box;border:2px solid #b8b8b8;border-bottom:0;background:#000}
  .pv{display:block;width:466px;height:506px}
  .gr{font:30px "Liberation Serif",serif;fill:#00d000}
  .big{font:32px "Liberation Serif",serif;fill:#dfe6ee}
  .bigc{font:30px "Noto Sans CJK SC",sans-serif;fill:#dfe6ee;letter-spacing:5px}

  .ball{position:absolute;left:1825px;top:447px;width:52px;height:52px;border-radius:50%;box-sizing:border-box;border:2px solid #d6d6d6;background:radial-gradient(circle at 40% 40%,#63d66b,#2fae3f);box-shadow:0 2px 5px rgba(0,0,0,.35);color:#fff;font:italic 700 17px/48px "Liberation Sans",sans-serif;padding-left:6px;overflow:hidden}
  .ime{position:absolute;left:1529px;top:936px;width:309px;height:23px;overflow:hidden}
  .ilogo{position:absolute;left:0;top:0;width:37px;height:32px;background:#f0642a;border-radius:4px 8px 0 0;transform:skewX(-6deg);color:#fff;text-align:center;font:700 30px/38px "Liberation Sans",sans-serif}
  .ibar{position:absolute;left:32px;top:6px;right:0;bottom:-8px;background:#fff;border:1px solid #aeb8c4;display:flex;align-items:flex-start;gap:14px;padding:2px 0 0 18px;box-sizing:border-box}
  .zh{font-size:22px;line-height:24px;color:#2878c8;font-weight:700;flex:none}
  .ii{width:18px;height:22px;flex:none}
  .ii.w{width:24px;height:24px}
  .ii.n{width:13px}

  .ink{position:absolute;left:0;top:0;width:1849px;height:959px;pointer-events:none}
  .ink path{fill:none;stroke:#f93a3c;stroke-width:5.500;stroke-linecap:round;stroke-linejoin:round}

  .sig{font:700 20px "Liberation Serif",serif;fill:#222}
  .six{font:14px "Liberation Serif",serif;fill:#bbb}
  .az{font:700 10px "Liberation Sans",sans-serif}
  .a{fill:#2c63c8}
  .z{fill:#b83c28}
</style>
